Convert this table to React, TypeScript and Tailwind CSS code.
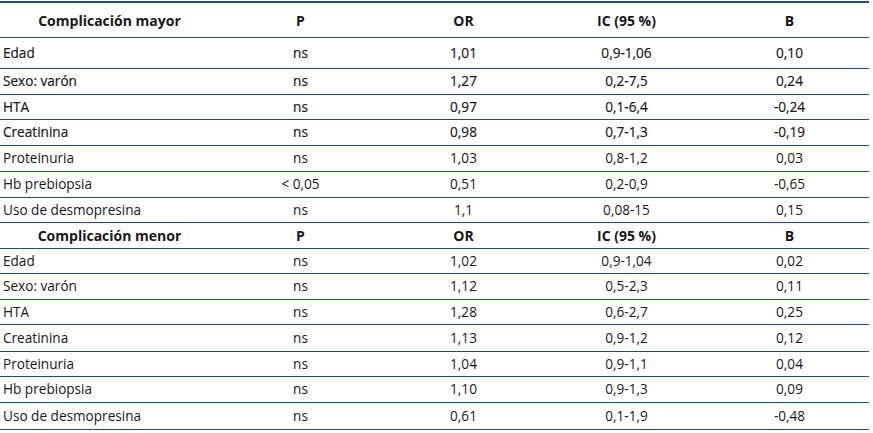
const LINE = 'border-[#1c4b8c]'

type Row = {
  label: string
  p: string
  or: string
  ic: string
  b: string
  h: string
  strong?: boolean
}

interface Section {
  title: string
  headH: string
  rows: Row[]
}

const sections: Section[] = [
  {
    title: 'Complicación mayor',
    headH: 'h-[35px]',
    rows: [
      { label: 'Edad', p: 'ns', or: '1,01', ic: '0,9-1,06', b: '0,10', h: 'h-[31px]', strong: true },
      { label: 'Sexo: varón', p: 'ns', or: '1,27', ic: '0,2-7,5', b: '0,24', h: 'h-[26px]', strong: true },
      { label: 'HTA', p: 'ns', or: '0,97', ic: '0,1-6,4', b: '-0,24', h: 'h-[25px]', strong: true },
      { label: 'Creatinina', p: 'ns', or: '0,98', ic: '0,7-1,3', b: '-0,19', h: 'h-[26px]', strong: true },
      { label: 'Proteinuria', p: 'ns', or: '1,03', ic: '0,8-1,2', b: '0,03', h: 'h-[26px]' },
      { label: 'Hb prebiopsia', p: '< 0,05', or: '0,51', ic: '0,2-0,9', b: '-0,65', h: 'h-[26px]' },
      { label: 'Uso de desmopresina', p: 'ns', or: '1,1', ic: '0,08-15', b: '0,15', h: 'h-[25px]' },
    ],
  },
  {
    title: 'Complicación menor',
    headH: 'h-[26px]',
    rows: [
      { label: 'Edad', p: 'ns', or: '1,02', ic: '0,9-1,04', b: '0,02', h: 'h-[25px]' },
      { label: 'Sexo: varón', p: 'ns', or: '1,12', ic: '0,5-2,3', b: '0,11', h: 'h-[26px]' },
      { label: 'HTA', p: 'ns', or: '1,28', ic: '0,6-2,7', b: '0,25', h: 'h-[25px]' },
      { label: 'Creatinina', p: 'ns', or: '1,13', ic: '0,9-1,2', b: '0,12', h: 'h-[27px]' },
      { label: 'Proteinuria', p: 'ns', or: '1,04', ic: '0,9-1,1', b: '0,04', h: 'h-[25px]' },
      { label: 'Hb prebiopsia', p: 'ns', or: '1,10', ic: '0,9-1,3', b: '0,09', h: 'h-[26px]' },
      { label: 'Uso de desmopresina', p: 'ns', or: '0,61', ic: '0,1-1,9', b: '-0,48', h: 'h-[27px]' },
    ],
  },
]

const cols = 'grid grid-cols-[219px_163px_163px_163px_163px] items-center'

export default function App() {
  return (
    <div className="bg-white w-[873px] h-[433px] pt-px text-[13.6px] text-[#1a1718] font-['Open_Sans',sans-serif]">
      <div className={`w-[869px] border-t-2 ${LINE}`}>
        {sections.map(sec => (
          <div key={sec.title}>
            <div className={`${cols} ${sec.headH} border-b ${LINE} font-bold text-[14px]`}>
              <div className="text-center">{sec.title}</div>
              <div className="text-center">P</div>
              <div className="text-center">OR</div>
              <div className="text-center">IC (95 %)</div>
              <div className="text-center">B</div>
            </div>
            {sec.rows.map(r => (
              <div
                key={r.label}
                className={`${cols} ${r.h} border-b ${LINE} ${r.strong ? '[-webkit-text-stroke:0.2px_#1a1718]' : ''}`}
              >
                <div className="pl-[3px]">{r.label}</div>
                <div className="text-center">{r.p}</div>
                <div className="text-center">{r.or}</div>
                <div className="text-center">{r.ic}</div>
                <div className="text-center">{r.b}</div>
              </div>
            ))}
          </div>
        ))}
      </div>
    </div>
  )
}
